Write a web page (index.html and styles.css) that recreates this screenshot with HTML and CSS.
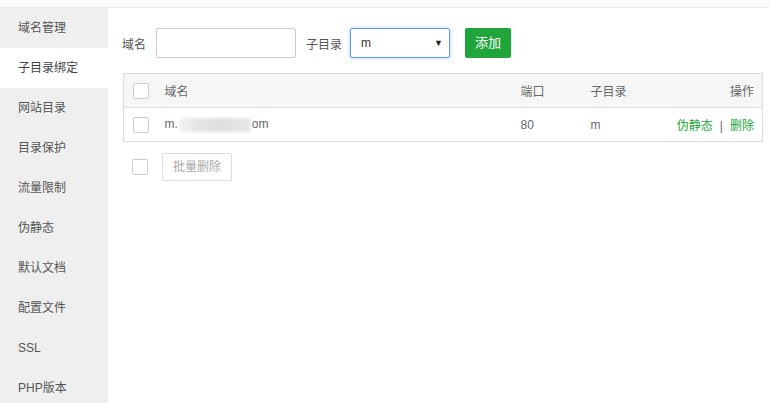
FILE: index.html
```html
<!DOCTYPE html>
<html>
<head>
<meta charset="utf-8">
<link rel="stylesheet" href="styles.css">
</head>
<body>
<div class="topbar"></div>
<div class="wrap">
  <ul class="side">
    <li>域名管理</li>
    <li class="active">子目录绑定</li>
    <li>网站目录</li>
    <li>目录保护</li>
    <li>流量限制</li>
    <li>伪静态</li>
    <li>默认文档</li>
    <li>配置文件</li>
    <li>SSL</li>
    <li>PHP版本</li>
  </ul>
  <div class="main">
    <div class="form">
      <span class="lbl">域名</span>
      <div class="input"></div>
      <span class="lbl lbl2">子目录</span>
      <div class="select"><span>m</span><span class="arrow">▼</span></div>
      <div class="btn-add">添加</div>
    </div>
    <table class="tbl">
      <colgroup><col class="c1"><col class="c2"><col class="c3"><col><col class="c5"></colgroup>
      <thead>
        <tr><th><span class="cb"></span></th><th>域名</th><th>端口</th><th>子目录</th><th class="r">操作</th></tr>
      </thead>
      <tbody>
        <tr><td><span class="cb"></span></td><td>m.<span class="blur"></span>om</td><td>80</td><td>m</td><td class="r"><a class="lnk">伪静态</a><span class="sep">|</span><a class="lnk">删除</a></td></tr>
      </tbody>
    </table>
    <div class="foot">
      <span class="cb"></span>
      <div class="btn-del">批量删除</div>
    </div>
  </div>
</div>
</body>
</html>
```
FILE: styles.css
```css
* { box-sizing: border-box; }
html, body { margin: 0; padding: 0; background: #fff; }
body { font-family: "Liberation Sans", "Noto Sans CJK SC", sans-serif; font-size: 12px; color: #666; width: 769px; height: 403px; overflow: hidden; }
.topbar { height: 8px; background: #fbfbfb; border-bottom: 1px solid #ececec; }
.wrap { display: flex; height: 395px; }
.side { list-style: none; margin: 0; padding: 0; width: 108px; background: #efefef; flex: none; }
.side li { height: 40px; line-height: 41px; padding-left: 18px; color: #555; }
.side li.active { background: #fff; color: #444; }
.main { flex: 1; padding: 20px 7px 0 15px; }
.form { display: flex; align-items: center; height: 30px; }
.lbl { color: #555; margin-left: -1px; }
.input { width: 140px; height: 30px; border: 1px solid #ccc; border-radius: 2px; margin-left: 10px; }
.lbl2 { margin-left: 10px; }
.select { width: 100px; height: 30px; margin-left: 8px; border: 1px solid #5d9cf6; border-radius: 2px; box-shadow: 0 0 4px rgba(80,150,250,0.45); display: flex; align-items: center; justify-content: space-between; padding: 0 6px 0 10px; color: #333; font-size: 12px; }
.arrow { font-size: 9px; color: #222; }
.btn-add { margin-left: 15px; width: 46px; height: 30px; line-height: 30px; text-align: center; background: #20a53a; color: #fff; border-radius: 2px; font-size: 13px; }
.tbl { width: 640px; margin-top: 15px; border-collapse: collapse; table-layout: fixed; border: 1px solid #ddd; }
.c1 { width: 33px; } .c2 { width: 356px; } .c3 { width: 70px; } .c5 { width: 110px; }
.tbl th, .tbl td { height: 34px; padding: 0 0 0 8px; text-align: left; font-weight: normal; color: #666; vertical-align: middle; }
.tbl th { background: #f6f6f6; border-bottom: 1px solid #ddd; }
.tbl th:first-child, .tbl td:first-child { padding-left: 9px; }
.tbl .r { text-align: right; padding-right: 8px; }
.cb { display: inline-block; width: 16px; height: 16px; border: 1px solid #ccc; border-radius: 2px; background: #fff; vertical-align: middle; }
.blur { display: inline-block; width: 72px; height: 14px; vertical-align: middle; background: linear-gradient(90deg, #f3f3f3 0%, #e6e6e6 25%, #dedede 60%, #e8e8e8 100%); filter: blur(1.5px); margin: 0 1px; }
.lnk { color: #20a53a; }
.sep { margin: 0 7px; color: #666; }
.foot { display: flex; align-items: center; margin-top: 11px; padding-left: 9px; height: 28px; }
.btn-del { margin-left: 14px; width: 70px; height: 28px; line-height: 26px; text-align: center; border: 1px solid #ddd; border-radius: 2px; color: #aaa; }
```
